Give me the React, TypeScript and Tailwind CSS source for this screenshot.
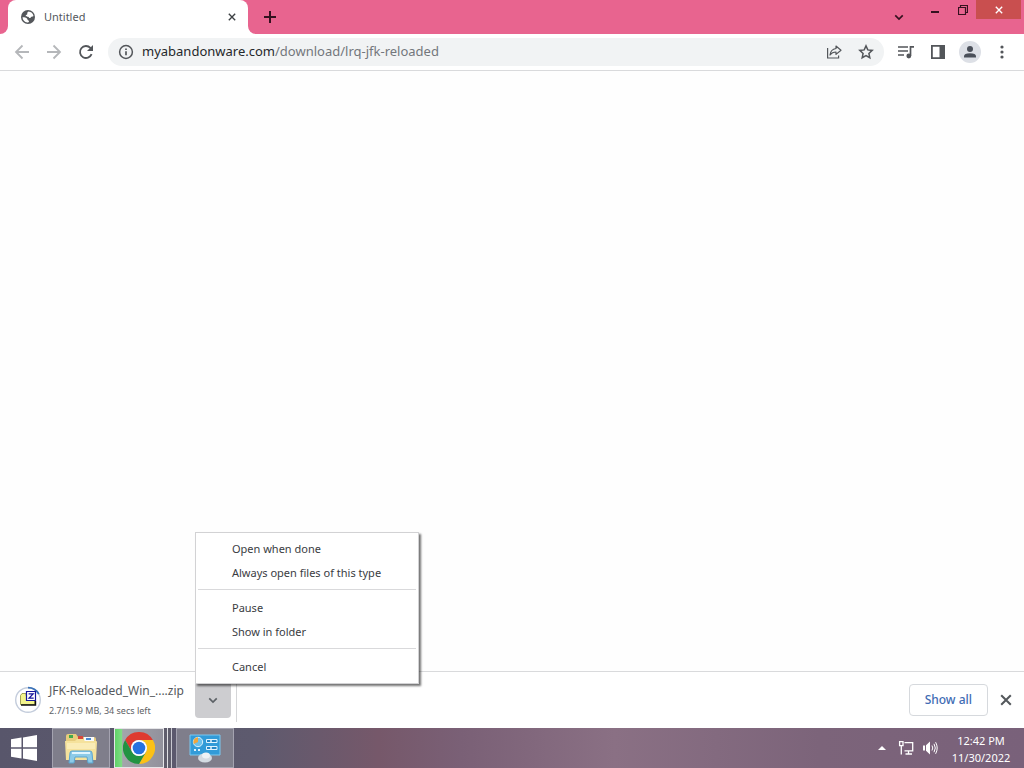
import React from 'react';

type IconProps = {
  className?: string;
};

const BackIcon: React.FC<IconProps> = ({ className }) => (
  <svg viewBox="0 0 16 16" className={className} fill="none" stroke="currentColor" strokeWidth="1.8">
    <path d="M15 8H2M8.500 1.500L2 8l6.500 6.500" />
  </svg>
);

const ReloadIcon: React.FC<IconProps> = ({ className }) => (
  <svg viewBox="0 0 16 16" className={className} fill="none" stroke="currentColor" strokeWidth="1.800">
    <path d="M13.600 10.200A6 6 0 1 1 12.400 3.900L14 5.500" />
    <path d="M15 1v6H9z" fill="currentColor" stroke="none" />
  </svg>
);

const CloseIcon: React.FC<IconProps> = ({ className }) => (
  <svg viewBox="0 0 10 10" className={className} fill="none" stroke="currentColor" strokeWidth="1.7">
    <path d="M1 1l8 8M9 1L1 9" />
  </svg>
);

const ChevronIcon: React.FC<IconProps> = ({ className }) => (
  <svg viewBox="0 0 12 8" className={className} fill="none" stroke="currentColor" strokeWidth="2">
    <path d="M1.500 1.500L6 6l4.500-4.500" />
  </svg>
);

const GlobeIcon: React.FC<IconProps> = ({ className }) => (
  <svg viewBox="0 0 16 16" className={className}>
    <circle cx="8" cy="8" r="7" fill="#54575b" />
    <path
      d="M8.500 2.600c2.600.2 4.600 1.900 5 4.300-.9.900-1.500.4-2.200.9-.6.500-.6 1.300-1.400 1.300-.9 0-1.100-1-1.800-1.300-.9-.4-2.200.1-2.400-.8-.2-.9.900-1 1.400-1.500.5-.6-.1-1.300.3-1.900.3-.4.800-.5 1.100-1z"
      fill="#fff"
    />
    <path d="M2.500 8.300c1.500-.2 3.200.2 4.200 1 .8.600.6 1.400 1.300 1.900.5.400 1 .3 1 1 0 .8-.8 1.300-1.700 1.300C4.600 13.300 2.600 11 2.500 8.300z" fill="#fff" />
  </svg>
);

const InfoIcon: React.FC<IconProps> = ({ className }) => (
  <svg viewBox="0 0 16 16" className={className} fill="none" stroke="currentColor" strokeWidth="1.500">
    <circle cx="8" cy="8" r="6.400" />
    <path d="M8 7.200v4M8 4.500v1.600" strokeWidth="1.700" />
  </svg>
);

const ShareIcon: React.FC<IconProps> = ({ className }) => (
  <svg viewBox="0 0 16 16" className={className} fill="none" stroke="currentColor" strokeWidth="1.200">
    <path d="M1.600 4v10h11v-2.500" />
    <path d="M10 2l5 4.200-5 4.200V8C7.500 8 5.500 8.800 4 11c.4-3.500 2.500-6 6-6.500z" strokeLinejoin="round" />
  </svg>
);

const StarIcon: React.FC<IconProps> = ({ className }) => (
  <svg viewBox="0 0 16 16" className={className} fill="none" stroke="currentColor" strokeWidth="1.500">
    <path d="M8 1.900l1.800 4 4.400.5-3.300 3 .9 4.300L8 11.500l-3.800 2.200.9-4.300-3.300-3 4.400-.5z" />
  </svg>
);

const MediaIcon: React.FC<IconProps> = ({ className }) => (
  <svg viewBox="0 0 18 16" className={className} fill="none" stroke="currentColor" strokeWidth="1.700">
    <path d="M1 3h10M1 7h10M1 11h6M13.500 12V2.900H17" />
    <circle cx="11.800" cy="12" r="2.400" fill="currentColor" stroke="none" />
  </svg>
);

const SidePanelIcon: React.FC<IconProps> = ({ className }) => (
  <svg viewBox="0 0 16 16" className={className}>
    <path d="M1 1h14v14H1zM2.800 2.800v10.400h6.700V2.800z" fill="currentColor" fillRule="evenodd" />
  </svg>
);

const ZipIcon: React.FC<IconProps> = ({ className }) => (
  <svg viewBox="0 0 28 28" className={className}>
    <circle cx="14" cy="14" r="12.300" fill="none" stroke="#c4cddc" strokeWidth="1.400" />
    <path d="M14 1.700a12.300 12.300 0 0 1 10.800 6.400" fill="none" stroke="#3a72b8" strokeWidth="1.800" />
    <path d="M6.500 9.500l1.500-2h4v2h8.500v9h-14z" fill="#f3f48c" stroke="#8c8c3c" strokeWidth=".8" />
    <path d="M7 19h14.500v-4" fill="none" stroke="#111" strokeWidth="1.400" />
    <path d="M12.500 5.500h9v9h-9z" fill="#fff" stroke="#15159b" strokeWidth="1.200" />
    <path d="M14.600 7.900h4.500l-4 4.200h4.600" fill="none" stroke="#15159b" strokeWidth="1.300" />
  </svg>
);

const WindowsIcon: React.FC<IconProps> = ({ className }) => (
  <svg viewBox="0 0 28 28" className={className} fill="#fff">
    <path d="M1 5.300L11.500 3.600V13.300H1zM13 3.400L27 1v12.300H13zM1 14.700h10.500v9.700L1 22.700zM13 14.700h14V27l-14-2.400z" />
  </svg>
);

const ExplorerIcon: React.FC<IconProps> = ({ className }) => (
  <svg viewBox="0 0 34 32" className={className}>
    <path d="M2 4q0-2 2-2h8l2 3h16q2 0 2 2v21H2z" fill="#e6cc7c" />
    <path d="M5 3h4v3H5z" fill="#40a84b" />
    <path d="M14 4h5v3h-5z" fill="#d6473c" />
    <path d="M20 5h10v4H20z" fill="#f8fafc" />
    <path d="M22 6h5v2h-5z" fill="#4a8dd0" />
    <path d="M1 9h10l2-2h6l2 2h11q1 0 1 1l-1 18H2z" fill="#f5e29c" />
    <path d="M3 11h28v6H3z" fill="#faecb6" />
    <path d="M5 31l1-10q0-2 2-2h18q2 0 2 2l1 10h-5l-1-6H11l-1 6z" fill="#8dcbe8" stroke="#5aa5cf" />
    <path d="M8 21h18" stroke="#dff5ff" strokeWidth="2" />
  </svg>
);

const ChromeIcon: React.FC<IconProps> = ({ className }) => (
  <svg viewBox="0 0 32 32" className={className}>
    <path d="M2.140 8A16 16 0 0 1 29.860 8H16a8 8 0 0 0-6.930 12z" fill="#de3b30" />
    <path d="M29.860 8A16 16 0 0 1 16 32l6.930-12A8 8 0 0 0 16 8z" fill="#fbc116" />
    <path d="M16 32A16 16 0 0 1 2.140 8l6.930 12a8 8 0 0 0 13.860 0z" fill="#229342" />
    <circle cx="16" cy="16" r="8" fill="#fff" />
    <circle cx="16" cy="16" r="6.300" fill="#2672e0" />
  </svg>
);

const ControlPanelIcon: React.FC<IconProps> = ({ className }) => (
  <svg viewBox="0 0 32 30" className={className}>
    <path d="M1 2h30v20H1z" fill="#329bd8" stroke="#7cc8ef" />
    <circle cx="9" cy="9" r="4.700" fill="#6cc0eb" stroke="#d9f1fc" />
    <path d="M9 9V4.300A4.700 4.700 0 0 0 4.800 11z" fill="#f1a63b" />
    <path d="M17.500 6.500h4.500v3h-4.500zM22 6.500h6v3h-6zM17.500 13.500h4.500v3h-4.500zM22 13.500h6v3h-6z" fill="#2587c6" stroke="#e0f4ff" />
    <path d="M5 17h2M9 17h2" stroke="#e0f4ff" strokeWidth="2" />
    <ellipse cx="16" cy="25" rx="7" ry="4.500" fill="#d4dbe2" />
    <ellipse cx="17" cy="22.500" rx="4" ry="3" fill="#eef2f5" />
  </svg>
);

const NetworkIcon: React.FC<IconProps> = ({ className }) => (
  <svg viewBox="0 0 16 16" className={className} fill="none" stroke="#fff" strokeWidth="1.300">
    <path d="M6.500 2.600h8.200v8.200H6.500M10.500 10.800v3M7.500 14h6.500" />
    <path d="M1.600 1.600h3.400v4H1.600zM3.300 5.600v8.900" />
  </svg>
);

const SpeakerIcon: React.FC<IconProps> = ({ className }) => (
  <svg viewBox="0 0 16 16" className={className} fill="none" stroke="#fff">
    <path d="M1 5.500h2v5H1zM4 5.200L8 1.500v13l-4-3.700z" fill="#fff" stroke="none" />
    <path d="M10 5.500q1.500 2.500 0 5M12 3.800q2.600 4.200 0 8.400M13.600 2.200q3.200 5.800 0 11.600" />
  </svg>
);

const menuGroups: string[][] = [
  ['Open when done', 'Always open files of this type'],
  ['Pause', 'Show in folder'],
  ['Cancel'],
];

const TabStrip: React.FC = () => (
  <header className="flex h-[34px] items-start bg-[#e8648f] text-[#35111f]">
    <div className="flex h-full w-2 bg-white">
      <span className="flex-1 rounded-br-lg bg-[#e8648f]" />
    </div>
    <div className="flex h-full w-60 items-center rounded-t-lg bg-white px-3">
      <GlobeIcon className="size-4" />
      <span className="ml-2 flex-1 text-[11px] text-[#55595d]">Untitled</span>
      <button aria-label="Close tab" className="text-[#3c4043]">
        <CloseIcon className="size-2" />
      </button>
    </div>
    <div className="flex h-full w-2 bg-white">
      <span className="flex-1 rounded-bl-lg bg-[#e8648f]" />
    </div>
    <button aria-label="New tab" className="flex h-full w-7 items-center justify-center">
      <svg viewBox="0 0 12 12" className="size-3" stroke="currentColor" strokeWidth="2">
        <path d="M6 0v12M0 6h12" />
      </svg>
    </button>
    <div className="flex-1" />
    <button aria-label="Search tabs" className="flex h-full w-11 items-center justify-center">
      <ChevronIcon className="h-[7px] w-[10px]" />
    </button>
    <button aria-label="Minimize" className="flex h-6 w-7 items-center justify-center">
      <span className="h-[2px] w-2 bg-current" />
    </button>
    <button aria-label="Restore" className="flex h-[19px] w-[27px] items-center justify-center">
      <svg viewBox="0 0 10 10" className="size-[10px]" fill="none" stroke="currentColor">
        <path d="M.5 2.500h7v7h-7zM2.500 2.500v-2h7v7h-2" strokeWidth="1.200" />
      </svg>
    </button>
    <button aria-label="Close" className="mr-[3px] flex h-[19px] w-[45px] items-center justify-center bg-[#c94f4f] text-white">
      <CloseIcon className="size-2" />
    </button>
  </header>
);

const Toolbar: React.FC = () => (
  <nav className="flex h-[37px] items-center border-b border-[#d9dadc] bg-white pr-1.5 text-[#53565a]">
    <div className="flex w-[108px] items-center gap-4 pl-[14px]">
      <button aria-label="Back" className="text-[#b5b7ba]">
        <BackIcon className="size-4" />
      </button>
      <button aria-label="Forward" className="text-[#b5b7ba]">
        <BackIcon className="size-4 rotate-180" />
      </button>
      <button aria-label="Reload">
        <ReloadIcon className="size-4" />
      </button>
    </div>
    <div className="flex h-7 flex-1 items-center rounded-full bg-[#f1f3f4] px-[10px]">
      <button aria-label="View site information">
        <InfoIcon className="size-4" />
      </button>
      <div className="ml-2 flex-1 text-[13px] text-[#73777c]">
        <span className="text-[#25282b]">myabandonware.com</span>/download/lrq-jfk-reloaded
      </div>
      <button aria-label="Share this page" className="mr-4">
        <ShareIcon className="size-4" />
      </button>
      <button aria-label="Bookmark this tab">
        <StarIcon className="size-4" />
      </button>
    </div>
    <div className="ml-1.5 flex items-center">
      <button aria-label="Media controls" className="flex w-8 justify-center">
        <MediaIcon className="h-4 w-[18px]" />
      </button>
      <button aria-label="Side panel" className="flex w-8 justify-center">
        <SidePanelIcon className="size-4" />
      </button>
      <button aria-label="Profile" className="flex w-8 justify-center">
        <svg viewBox="0 0 22 22" className="size-[22px]">
          <circle cx="11" cy="11" r="11" fill="#dde0e6" />
          <circle cx="11" cy="8" r="3" fill="#4b505a" />
          <path d="M5 16.500v-1.300q0-3 6-3t6 3v1.300z" fill="#4b505a" />
        </svg>
      </button>
      <button aria-label="Menu" className="flex w-8 justify-center">
        <svg viewBox="0 0 4 14" className="h-[14px] w-1" fill="currentColor">
          <circle cx="2" cy="2" r="1.600" />
          <circle cx="2" cy="7" r="1.600" />
          <circle cx="2" cy="12" r="1.600" />
        </svg>
      </button>
    </div>
  </nav>
);

const DownloadMenu: React.FC = () => (
  <div
    role="menu"
    className="absolute bottom-[34px] left-0 z-10 w-56 border border-[#d2d2d4] bg-white py-1 shadow-[2px_2px_2px_rgba(0,0,0,0.55)]"
  >
    {menuGroups.map((group, index) => (
      <div key={group[0]}>
        {index > 0 && <div className="mx-0.5 mt-1 mb-1.5 h-px bg-[#d9d9db]" />}
        {group.map((label) => (
          <button
            key={label}
            role="menuitem"
            className="block h-6 w-full pl-9 text-left text-[11px] whitespace-nowrap text-[#3a3c3f]"
          >
            {label}
          </button>
        ))}
      </div>
    ))}
  </div>
);

const DownloadShelf: React.FC = () => (
  <footer className="flex h-[57px] items-center border-t border-[#d9dadc] bg-white">
    <ZipIcon className="ml-[14px] size-7" />
    <div className="ml-[7px] w-[146px] pt-0.5 whitespace-nowrap">
      <p className="text-[12px] leading-5 text-[#55595d]">JFK-Reloaded_Win_....zip</p>
      <p className="text-[9px] leading-5 text-[#5d6165]">2.7/15.9 MB, 34 secs left</p>
    </div>
    <div className="relative flex">
      <button aria-label="Download options" className="flex h-9 w-9 items-center justify-center rounded-b bg-[#cdcdd0] text-[#5c6166]">
        <ChevronIcon className="h-[7px] w-[10px]" />
      </button>
      <DownloadMenu />
    </div>
    <div className="ml-[5px] h-11 w-px bg-[#d5d6d8]" />
    <div className="flex-1" />
    <button className="h-8 rounded border border-[#d6d9dd] px-[15px] text-[12px] font-medium text-[#416cb4]">
      Show all
    </button>
    <button aria-label="Close downloads bar" className="mr-3 ml-3 flex size-3 items-center justify-center text-[#54585c]">
      <CloseIcon className="size-3" />
    </button>
  </footer>
);

const Taskbar: React.FC = () => (
  <div className="flex h-10 items-center bg-[linear-gradient(to_right,#58566b_0%,#5d5a6e_25%,#76586a_37%,#7a6076_45%,#8a7084_60%,#7c647a_80%,#79617a_100%)] text-white">
    <button aria-label="Start" className="flex w-12 justify-center">
      <WindowsIcon className="size-7" />
    </button>
    <button aria-label="File Explorer" className="ml-1 flex h-full w-[58px] items-center justify-center border border-[#a4a3b0] bg-[#7f7e8b]">
      <ExplorerIcon className="h-8 w-[34px]" />
    </button>
    <button aria-label="Google Chrome" className="ml-1 flex h-full w-[58px]">
      <span className="flex h-full w-[50px] items-center justify-center border border-[#e5e5e8] bg-[linear-gradient(to_right,#5fd268_0%,#7fdc84_14%,#a3a5ab_16%,#92919c_100%)]">
        <ChromeIcon className="size-8" />
      </span>
      <span className="h-full w-1 border-r border-[#e0e0e4] bg-[#5f5d6c]" />
      <span className="h-full w-1 border-r border-[#c9c9d0] bg-[#5f5d6c]" />
    </button>
    <button aria-label="Control Panel" className="ml-1 flex h-full w-[58px] items-center justify-center border border-[#a4a3b0] bg-[#7f7e8b]">
      <ControlPanelIcon className="h-[30px] w-8" />
    </button>
    <div className="flex-1" />
    <button aria-label="Show hidden icons">
      <svg viewBox="0 0 8 4" className="h-1 w-2" fill="#fff">
        <path d="M0 4l4-4 4 4z" />
      </svg>
    </button>
    <button aria-label="Network" className="ml-3">
      <NetworkIcon className="size-4" />
    </button>
    <button aria-label="Volume" className="ml-2">
      <SpeakerIcon className="size-4" />
    </button>
    <div className="mr-2 ml-2 w-[70px] pt-0.5 text-center text-[11px] leading-[17px]">
      <p>12:42 PM</p>
      <p>11/30/2022</p>
    </div>
  </div>
);

const App: React.FC = () => {
  return (
    <div className="flex min-h-screen flex-col bg-white font-['Noto_Sans','Open_Sans',sans-serif]">
      <TabStrip />
      <Toolbar />
      <main className="flex-1 bg-[#fefefe]" />
      <DownloadShelf />
      <Taskbar />
    </div>
  );
};

export default App;
